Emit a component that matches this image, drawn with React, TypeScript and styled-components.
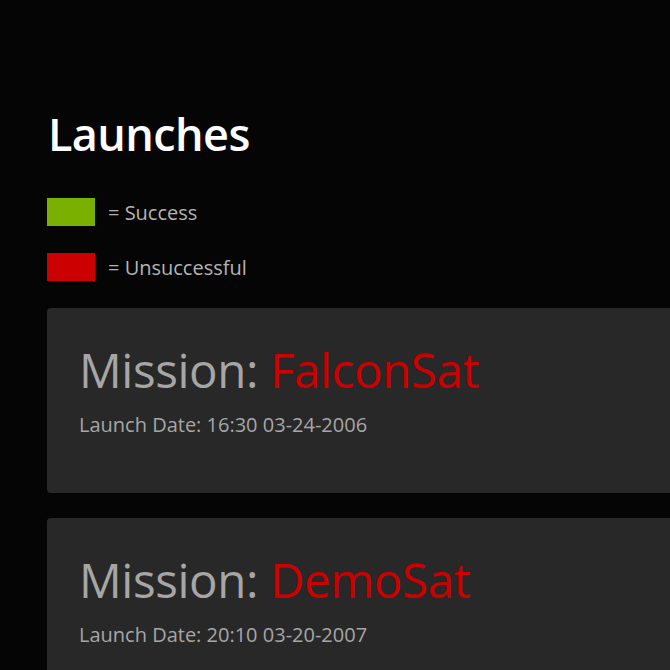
import styled, { createGlobalStyle } from 'styled-components';

const GlobalStyle = createGlobalStyle`
  html, body {
    margin: 0;
    padding: 0;
    background-color: #050505;
    overflow: hidden;
    font-family: 'Open Sans', 'Noto Sans', sans-serif;
  }
`;

const Page = styled.main`
  padding: 100px 0 0 47px;
  width: 760px;
`;

const Title = styled.h1`
  margin: 0 0 30px 1px;
  font-size: 45px;
  font-weight: 600;
  line-height: 68px;
  color: #ffffff;
  letter-spacing: -0.6px;
`;

const Legend = styled.div`
  display: flex;
  flex-direction: column;
  gap: 27px;
  margin-bottom: 27px;
`;

const LegendRow = styled.div`
  display: flex;
  align-items: center;
  gap: 13px;
  height: 28px;
  font-size: 20px;
  color: #b4b4b4;
`;

const Swatch = styled.span<{ color: string }>`
  width: 48px;
  height: 28px;
  background-color: ${({ color }) => color};
`;

const Card = styled.section`
  background-color: #282828;
  border-radius: 4px;
  height: 185px;
  padding: 26px 32px 0;
  box-sizing: border-box;
  margin-bottom: 25px;
`;

const Mission = styled.h2`
  margin: 0;
  font-size: 47.5px;
  font-weight: 500;
  line-height: 72px;
  color: #a6a6a6;
  letter-spacing: -0.4px;
`;

const Name = styled.span<{ success: boolean }>`
  color: ${({ success }) => (success ? '#7ab100' : '#cc0000')};
`;

const LaunchDate = styled.p`
  margin: 5px 0 0;
  font-size: 20px;
  color: #a6a6a6;
`;

const launches = [
  { name: 'FalconSat', date: '16:30 03-24-2006', success: false },
  { name: 'DemoSat', date: '20:10 03-20-2007', success: false },
];

export default function App() {
  return (
    <>
      <GlobalStyle />
      <Page>
        <Title>Launches</Title>
        <Legend>
          <LegendRow>
            <Swatch color="#7ab100" />= Success
          </LegendRow>
          <LegendRow>
            <Swatch color="#cc0000" />= Unsuccessful
          </LegendRow>
        </Legend>
        {launches.map((l) => (
          <Card key={l.name}>
            <Mission>
              Mission: <Name success={l.success}>{l.name}</Name>
            </Mission>
            <LaunchDate>Launch Date: {l.date}</LaunchDate>
          </Card>
        ))}
      </Page>
    </>
  );
}
